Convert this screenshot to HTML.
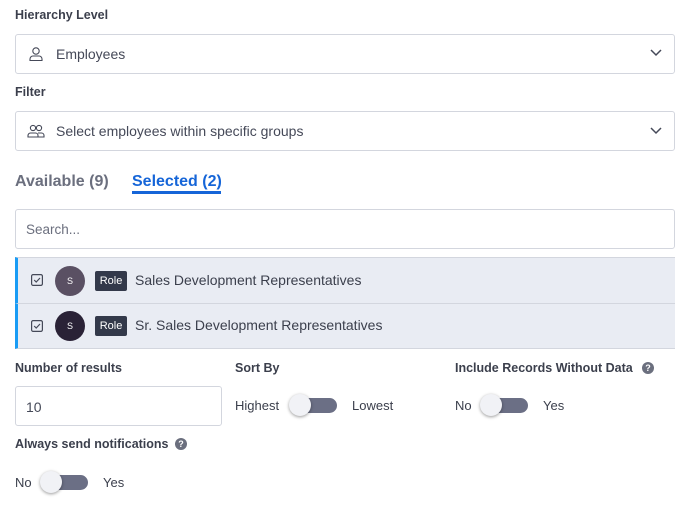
<!DOCTYPE html><html><head><style>
body{margin:0;width:693px;height:507px;background:#fff;font-family:"Liberation Sans",sans-serif;color:#3b3f4c;position:relative;overflow:hidden}
.a{position:absolute}
.lbl{font-size:12.5px;font-weight:bold;color:#3b3f4c}
.box{position:absolute;border:1px solid #d3d6de;border-radius:3px;background:#fff;box-sizing:border-box}
.t{font-size:14px;color:#454958}
.row{position:absolute;left:15px;width:660px;height:45px;background:#e9ecf3;border-left:3px solid #1a9cf5;box-sizing:border-box;border-bottom:1px solid #d3d6de}
.cb{position:absolute;left:13px;top:16px;width:12px;height:12px}
.av{position:absolute;left:37px;top:7px;width:30px;height:30px;border-radius:50%;color:#fff;font-size:9px;text-align:center;line-height:30px}
.role{position:absolute;left:77px;top:12px;width:32px;height:20px;background:#33394a;color:#fff;font-size:11px;text-align:center;line-height:20px;border-radius:2px}
.rt{position:absolute;left:117px;top:13px;font-size:14px;color:#3b3f4c}
.tg{position:absolute;width:46px;height:15px;border-radius:8px;background:#6b6f85}
.tg:before{content:"";position:absolute;left:-2px;top:-4px;width:22px;height:22px;border-radius:50%;background:#f1f2f6;box-shadow:0 1px 3px rgba(0,0,0,.4)}
.q{position:absolute;width:12px;height:12px;border-radius:50%;background:#6b6f7e;color:#fff;font-size:9px;font-weight:bold;text-align:center;line-height:12px}
</style></head><body>
<div class="a lbl" style="left:15px;top:8px">Hierarchy Level</div>
<div class="box" style="left:15px;top:34px;width:660px;height:40px">
<svg class="a" style="left:12px;top:11px" width="16" height="16" viewBox="0 0 16 16" fill="none" stroke="#454958" stroke-width="1.1"><circle cx="8" cy="5" r="3.2"/><path d="M2 14.5v-1.5a3 3 0 0 1 3-3h6a3 3 0 0 1 3 3v1.5z"/></svg>
<div class="a t" style="left:40px;top:11px">Employees</div>
<svg class="a" style="left:634px;top:14px" width="12" height="8" viewBox="0 0 12 8" fill="none" stroke="#454958" stroke-width="1.5"><path d="M1 1l5 5 5-5"/></svg></div>
<div class="a lbl" style="left:15px;top:85px">Filter</div>
<div class="box" style="left:15px;top:111px;width:660px;height:40px">
<svg class="a" style="left:11px;top:11px" width="18" height="16" viewBox="0 0 18 16" fill="none" stroke="#454958" stroke-width="1.1"><circle cx="6" cy="5" r="2.6"/><circle cx="12" cy="5" r="2.6"/><path d="M1 14v-1.5a2.5 2.5 0 0 1 2.5-2.5h5a2.5 2.5 0 0 1 2.5 2.5V14z M11 10h3.5a2.5 2.5 0 0 1 2.5 2.5V14h-6"/></svg>
<div class="a t" style="left:40px;top:11px">Select employees within specific groups</div>
<svg class="a" style="left:634px;top:15px" width="12" height="8" viewBox="0 0 12 8" fill="none" stroke="#454958" stroke-width="1.5"><path d="M1 1l5 5 5-5"/></svg></div>
<div class="a" style="left:15px;top:173px;font-size:16px;font-weight:bold;color:#6b6f7e">Available (9)</div>
<div class="a" style="left:132px;top:173px;font-size:16px;font-weight:bold;color:#1565d8">Selected (2)</div>
<div class="a" style="left:132px;top:191px;width:89px;height:3px;background:#1565d8"></div>
<div class="box" style="left:15px;top:209px;width:660px;height:40px"><div class="a" style="left:10px;top:12px;font-size:13.5px;color:#6b6f7e">Search...</div></div>
<div class="row" style="top:257px;border-top:1px solid #d3d6de;height:47px"><svg class="cb" viewBox="0 0 12 12" fill="none" stroke="#454958" stroke-width="1.2"><rect x="0.6" y="0.6" width="10.8" height="10.8" rx="1.5"/><path d="M3.2 6l2 2 3.8-4"/></svg><div class="av" style="background:#5a5063;top:8px">S</div><div class="role" style="top:13px">Role</div><div class="rt" style="top:14px">Sales Development Representatives</div></div>
<div class="row" style="top:304px"><svg class="cb" viewBox="0 0 12 12" fill="none" stroke="#454958" stroke-width="1.2"><rect x="0.6" y="0.6" width="10.8" height="10.8" rx="1.5"/><path d="M3.2 6l2 2 3.8-4"/></svg><div class="av" style="background:#2a2236">S</div><div class="role">Role</div><div class="rt">Sr. Sales Development Representatives</div></div>
<div class="a lbl" style="left:15px;top:361px">Number of results</div>
<div class="box" style="left:15px;top:386px;width:207px;height:40px"><div class="a t" style="left:10px;top:12px">10</div></div>
<div class="a lbl" style="left:235px;top:361px">Sort By</div>
<div class="a" style="left:235px;top:398px;font-size:13px">Highest</div>
<div class="tg" style="left:291px;top:398px"></div>
<div class="a" style="left:352px;top:398px;font-size:13px">Lowest</div>
<div class="a lbl" style="left:455px;top:361px">Include Records Without Data</div>
<div class="q" style="left:642px;top:362px">?</div>
<div class="a" style="left:455px;top:398px;font-size:13px">No</div>
<div class="tg" style="left:482px;top:398px"></div>
<div class="a" style="left:543px;top:398px;font-size:13px">Yes</div>
<div class="a lbl" style="left:15px;top:437px">Always send notifications</div>
<div class="q" style="left:175px;top:438px">?</div>
<div class="a" style="left:15px;top:475px;font-size:13px">No</div>
<div class="tg" style="left:42px;top:475px"></div>
<div class="a" style="left:103px;top:475px;font-size:13px">Yes</div>
</body></html>
